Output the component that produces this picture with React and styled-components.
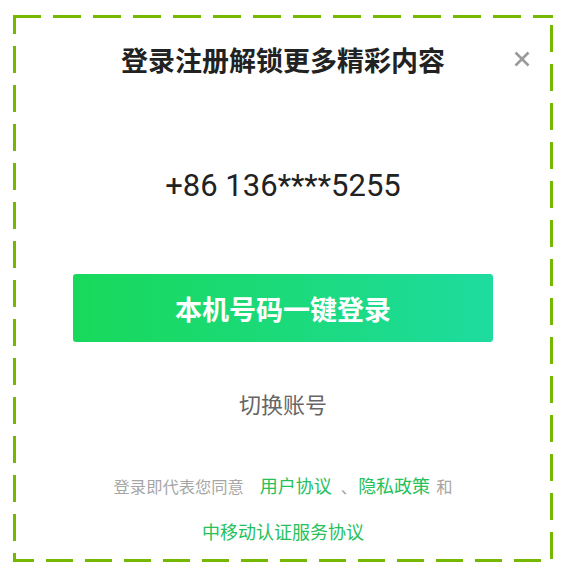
import React from "react";
import styled, { createGlobalStyle } from "styled-components";

const Global = createGlobalStyle`
  html, body { margin: 0; padding: 0; background: #fff; }
  body { font-family: "Noto Sans CJK SC", "Noto Sans", sans-serif; }
`;

const Page = styled.div`
  padding: 15px 12px 11px 13px;
  width: 565px;
  box-sizing: border-box;
`;

const Card = styled.div`
  position: relative;
  width: 540px;
  height: 547px;
  box-sizing: border-box;
  padding: 25px 3px 3px;
  display: flex;
  flex-direction: column;
  align-items: center;
  background: #fff;
`;

const Frame = styled.svg`
  position: absolute;
  left: 0;
  top: 0;
  pointer-events: none;
`;

const Title = styled.h1`
  margin: 0;
  font-size: 27px;
  line-height: 40px;
  font-weight: 700;
  color: #222;
  font-family: "Noto Sans CJK SC", sans-serif;
`;

const Close = styled.button`
  position: absolute;
  top: 36px;
  right: 23px;
  width: 16px;
  height: 16px;
  padding: 0;
  border: 0;
  background: none;
  display: flex;
  align-items: center;
  justify-content: center;
`;

const Phone = styled.div`
  margin-top: 86px;
  font-family: Roboto, "Noto Sans", sans-serif;
  font-size: 31px;
  line-height: 40px;
  color: #222;
`;

const LoginButton = styled.button`
  margin-top: 68px;
  width: 420px;
  height: 68px;
  border: 0;
  border-radius: 3px;
  background: linear-gradient(90deg, #19d95b 0%, #1bda7a 50%, #1edc9f 100%);
  color: #fff;
  font-family: "Noto Sans CJK SC", sans-serif;
  font-size: 27px;
  font-weight: 700;
  display: flex;
  align-items: center;
  justify-content: center;
`;

const Switch = styled.div`
  margin-top: 46px;
  font-size: 22px;
  line-height: 30px;
  color: #666;
`;

const Terms = styled.div`
  margin-top: ${(p) => p.$top}px;
  line-height: 30px;
  display: flex;
  align-items: baseline;
  white-space: pre;
`;

const Muted = styled.span`
  font-size: 16.3px;
  color: #a6a6a6;
  margin-left: ${(p) => p.$gap || 0}px;
`;

const Link = styled.span`
  font-size: 18px;
  color: #26c05b;
  margin-left: ${(p) => p.$gap || 0}px;
`;

function DashedFrame() {
  const w = 540;
  const h = 547;
  const s = 3;
  const c = s / 2;
  return (
    <Frame width={w} height={h} viewBox={`0 0 ${w} ${h}`}>
      <g stroke="#74b800" strokeWidth={s} fill="none">
        <line x1={0} y1={c} x2={w} y2={c} strokeDasharray="28 12" />
        <line x1={c} y1={0} x2={c} y2={h} strokeDasharray="27 12" strokeDashoffset="8" />
        <line x1={w - c} y1={h - 3} x2={w - c} y2={0} strokeDasharray="27 12" />
        <line x1={w - 12} y1={h - c} x2={0} y2={h - c} strokeDasharray="27 12" />
      </g>
    </Frame>
  );
}

export default function App() {
  return (
    <Page>
      <Global />
      <Card>
        <DashedFrame />
        <Title>登录注册解锁更多精彩内容</Title>
        <Close aria-label="关闭">
          <svg width="16" height="16" viewBox="0 0 16 16">
            <path d="M1.5 1.5 L14.5 14.5 M14.5 1.5 L1.5 14.5" stroke="#9a9a9a" strokeWidth="2.6" strokeLinecap="butt" />
          </svg>
        </Close>
        <Phone>+86 136****5255</Phone>
        <LoginButton>本机号码一键登录</LoginButton>
        <Switch>切换账号</Switch>
        <Terms $top={52}>
          <Muted>登录即代表您同意</Muted>
          <Link $gap={16}>用户协议</Link>
          <Muted $gap={9}>、</Muted>
          <Link $gap={1}>隐私政策</Link>
          <Muted $gap={6}>和</Muted>
        </Terms>
        <Terms $top={15}>
          <Link>中移动认证服务协议</Link>
        </Terms>
      </Card>
    </Page>
  );
}
